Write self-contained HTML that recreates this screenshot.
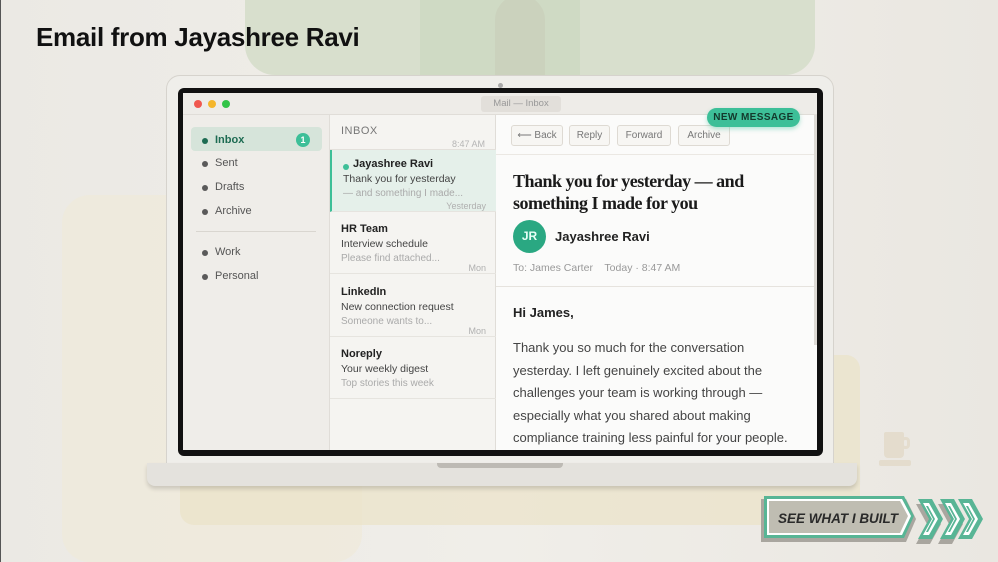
<!DOCTYPE html>
<html><head><meta charset="utf-8"><style>
*{margin:0;padding:0;box-sizing:border-box}
body{width:998px;height:562px;overflow:hidden;background:#eceae5;font-family:"Liberation Sans",sans-serif;position:relative}
.abs{position:absolute}
.t{font-family:"Liberation Sans",sans-serif}
.side div.it{position:absolute;left:20px;font-size:11px;color:#555}
.side .dot{position:absolute;left:-1px;width:6px;height:6px;border-radius:50%;background:#5a5a5a}
.msg{position:absolute;left:0;width:166px;height:62px;border-bottom:1px solid #e6e4df}
.msg .n{position:absolute;left:11px;top:11px;font-size:11px;font-weight:bold;color:#222}
.msg .s{position:absolute;left:11px;top:26px;font-size:10.5px;color:#444}
.msg .p{position:absolute;left:11px;top:41px;font-size:10px;color:#aaa}
.msg .d{position:absolute;right:10px;top:51px;font-size:9px;color:#b0b0b0}
.btn{position:absolute;top:125px;height:21px;border:1px solid #dedad3;border-radius:3px;background:#f7f6f3;font-size:10px;color:#777;text-align:center;line-height:19px}
.body{position:absolute;left:513px;font-size:13px;color:#444}
</style></head><body>
<div class="abs" style="left:0;top:0;width:998px;height:562px;background:linear-gradient(90deg,#ebe9e4,#f0eee9 50%,#eae7e1)"></div>
<div class="abs" style="left:245px;top:-20px;width:570px;height:95px;background:#d8dfcd;border-radius:0 0 30px 30px"></div>
<div class="abs" style="left:420px;top:-10px;width:160px;height:85px;background:#cfdac4"></div>
<div class="abs" style="left:495px;top:-5px;width:50px;height:80px;background:#cbd2bd;border-radius:25px 25px 0 0"></div>
<div class="abs" style="left:62px;top:195px;width:300px;height:367px;background:#efeadb;border-radius:28px;opacity:.8"></div>
<div class="abs" style="left:180px;top:355px;width:680px;height:170px;background:#ebe3c7;border-radius:14px;opacity:.7"></div>
<div class="abs" style="left:0;top:0;width:1px;height:562px;background:#555"></div>
<div class="abs t" style="left:36px;top:22px;font-size:26px;font-weight:bold;color:#111;letter-spacing:-.3px">Email from Jayashree Ravi</div>
<div class="abs" style="left:884px;top:432px;width:20px;height:26px;background:#e4dccd;border-radius:2px 2px 4px 4px"></div>
<div class="abs" style="left:901px;top:437px;width:9px;height:12px;border:3px solid #e4dccd;border-radius:4px"></div>
<div class="abs" style="left:879px;top:460px;width:32px;height:6px;background:#e4dccd;border-radius:2px"></div>
<div class="abs" style="left:166px;top:75px;width:668px;height:392px;background:#efeeea;border:1px solid #d6d3cd;border-radius:14px 14px 0 0"></div>
<div class="abs" style="left:498px;top:83px;width:5px;height:5px;border-radius:50%;background:#aaa"></div>
<div class="abs" style="left:178px;top:88px;width:645px;height:368px;background:#111;border-radius:6px"></div>
<div class="abs" style="left:147px;top:463px;width:710px;height:23px;background:#e4e2dd;border-radius:0 0 8px 8px;box-shadow:0 3px 4px rgba(0,0,0,.15)"></div>
<div class="abs" style="left:437px;top:463px;width:126px;height:5px;background:#bdbab4;border-radius:0 0 4px 4px"></div>
<div class="abs" style="left:183px;top:93px;width:634px;height:357px;background:#f3f2ef;overflow:hidden">
 <div class="abs" style="left:0;top:0;width:634px;height:22px;background:#eeece8;border-bottom:1px solid #e0ddd8"></div>
 <div class="abs" style="left:11px;top:7px;width:8px;height:8px;border-radius:50%;background:#f0584f"></div>
 <div class="abs" style="left:25px;top:7px;width:8px;height:8px;border-radius:50%;background:#f5b62b"></div>
 <div class="abs" style="left:39px;top:7px;width:8px;height:8px;border-radius:50%;background:#33c448"></div>
 <div class="abs" style="left:298px;top:3px;width:80px;height:16px;background:#e2dfda;border-radius:3px;font-size:9.5px;color:#999;text-align:center;line-height:16px">Mail — Inbox</div>
 <div class="side abs" style="left:0;top:22px;width:146px;height:335px;background:#efede9">
  <div class="abs" style="left:8px;top:12px;width:131px;height:24px;background:#d6e4da;border-radius:4px"></div>
  <div class="it" style="top:19px;color:#1d6b52;font-weight:bold"><span class="dot" style="top:4px;left:-1px;background:#1d6b52"></span><span style="margin-left:12px">Inbox</span></div>
  <div class="abs" style="left:113px;top:18px;width:14px;height:14px;border-radius:50%;background:#3dbf98;color:#fff;font-size:9px;font-weight:bold;text-align:center;line-height:14px">1</div>
  <div class="it" style="top:42px"><span class="dot" style="top:4px"></span><span style="margin-left:12px">Sent</span></div>
  <div class="it" style="top:66px"><span class="dot" style="top:4px"></span><span style="margin-left:12px">Drafts</span></div>
  <div class="it" style="top:90px"><span class="dot" style="top:4px"></span><span style="margin-left:12px">Archive</span></div>
  <div class="abs" style="left:13px;top:116px;width:120px;height:1px;background:#d9d6d0"></div>
  <div class="it" style="top:131px"><span class="dot" style="top:4px"></span><span style="margin-left:12px">Work</span></div>
  <div class="it" style="top:155px"><span class="dot" style="top:4px"></span><span style="margin-left:12px">Personal</span></div>
 </div>
 <div class="abs" style="left:146px;top:22px;width:167px;height:335px;background:#f5f4f1;border-left:1px solid #e0ddd8;border-right:1px solid #e0ddd8">
  <div class="abs" style="left:11px;top:10px;font-size:11px;color:#777;letter-spacing:.5px">INBOX</div>
  <div class="abs" style="right:10px;top:24px;font-size:9px;color:#b5b5b5">8:47 AM</div>
  <div class="abs" style="left:0;top:34px;width:166px;height:1px;background:#e3e0db"></div>
  <div class="msg" style="top:35px;height:62px;background:#e5f0ea;border-left:2px solid #3dbf98">
   <div class="abs" style="left:11px;top:14px;width:6px;height:6px;border-radius:50%;background:#3dbf98"></div>
   <div class="n" style="left:21px;top:8px">Jayashree Ravi</div>
   <div class="s" style="top:23px">Thank you for yesterday</div>
   <div class="p" style="top:38px">— and something I made...</div>
   <div class="d" style="top:51px">Yesterday</div>
  </div>
  <div class="msg" style="top:97px"><div class="n">HR Team</div><div class="s">Interview schedule</div><div class="p">Please find attached...</div><div class="d">Mon</div></div>
  <div class="msg" style="top:160px"><div class="n">LinkedIn</div><div class="s">New connection request</div><div class="p">Someone wants to...</div><div class="d">Mon</div></div>
  <div class="msg" style="top:222px"><div class="n">Noreply</div><div class="s">Your weekly digest</div><div class="p">Top stories this week</div></div>
 </div>
 <div class="abs" style="left:313px;top:22px;width:321px;height:335px;background:#fbfbfa"></div>
 <div class="abs" style="left:313px;top:193px;width:321px;height:1px;background:#e6e3de"></div>
 <div class="abs" style="left:313px;top:61px;width:321px;height:1px;background:#ebe8e3"></div>
 <div class="abs" style="left:631px;top:22px;width:3px;height:230px;background:#dddad5"></div>
</div>
<div class="btn" style="left:511px;width:52px">⟵ Back</div>
<div class="btn" style="left:569px;width:41px">Reply</div>
<div class="btn" style="left:617px;width:54px">Forward</div>
<div class="btn" style="left:678px;width:52px">Archive</div>
<div class="abs" style="left:707px;top:108px;width:93px;height:19px;background:#3dbf98;border-radius:10px;font-size:10px;font-weight:bold;color:#13392c;text-align:center;line-height:19px;letter-spacing:.4px;box-shadow:0 2px 5px rgba(61,191,152,.4)">NEW MESSAGE</div>
<div class="abs" style="left:513px;top:170px;font-family:'Liberation Serif',serif;font-size:18px;font-weight:bold;color:#1a1a1a;line-height:22px;letter-spacing:-.5px">Thank you for yesterday — and<br>something I made for you</div>
<div class="abs" style="left:513px;top:220px;width:33px;height:33px;border-radius:50%;background:#2aa882;color:#e8fff6;font-size:12px;font-weight:bold;text-align:center;line-height:33px">JR</div>
<div class="abs" style="left:555px;top:229px;font-size:13px;color:#222;font-weight:bold">Jayashree Ravi</div>
<div class="abs" style="left:513px;top:262px;font-size:10.5px;color:#999">To: James Carter &nbsp;&nbsp; Today · 8:47 AM</div>
<div class="body" style="top:305px;font-weight:bold;color:#222">Hi James,</div>
<div class="body" style="top:337px;line-height:22.5px">Thank you so much for the conversation<br>yesterday. I left genuinely excited about the<br>challenges your team is working through —<br>especially what you shared about making<br>compliance training less painful for your people.</div>
<svg class="abs" style="left:758px;top:494px" width="225" height="52" viewBox="0 0 225 52">
 <polygon points="3,5 148,5 158,25 148,48 3,48" fill="#a9a69f"/>
 <polygon points="6,2 146,2 156,22 146,44 6,44" fill="#58b595"/>
 <polygon points="9,5 144,5 153,22 144,41 9,41" fill="#fff"/>
 <polygon points="11,7 142,7 150,22 142,39 11,39" fill="#bfbdb2"/>
 <text x="20" y="29" font-family="Liberation Sans" font-weight="bold" font-style="italic" font-size="14" fill="#2a2a2a" textLength="120" lengthAdjust="spacingAndGlyphs">SEE WHAT I BUILT</text>
 <g transform="translate(160,5)"><polygon points="0,42 14,42 25,22 14,2 0,2 11,22" fill="#a9a69f" transform="translate(-2,3)"/><polygon points="0,0 14,0 25,20 14,40 0,40 11,20" fill="#58b595"/><polygon points="5,4 11,4 20,20 11,36 5,36 14,20" fill="#fff"/><polygon points="8,7 10,7 17,20 10,33 8,33 15,20" fill="#58b595"/></g>
 <g transform="translate(182,5)"><polygon points="0,42 14,42 25,22 14,2 0,2 11,22" fill="#a9a69f" transform="translate(-2,3)"/><polygon points="0,0 14,0 25,20 14,40 0,40 11,20" fill="#58b595"/><polygon points="5,4 11,4 20,20 11,36 5,36 14,20" fill="#fff"/><polygon points="8,7 10,7 17,20 10,33 8,33 15,20" fill="#58b595"/></g>
 <g transform="translate(200,5)"><polygon points="0,0 14,0 25,20 14,40 0,40 11,20" fill="#58b595"/><polygon points="5,4 11,4 20,20 11,36 5,36 14,20" fill="#fff"/><polygon points="8,7 10,7 17,20 10,33 8,33 15,20" fill="#58b595"/></g>
</svg>
</body></html>
